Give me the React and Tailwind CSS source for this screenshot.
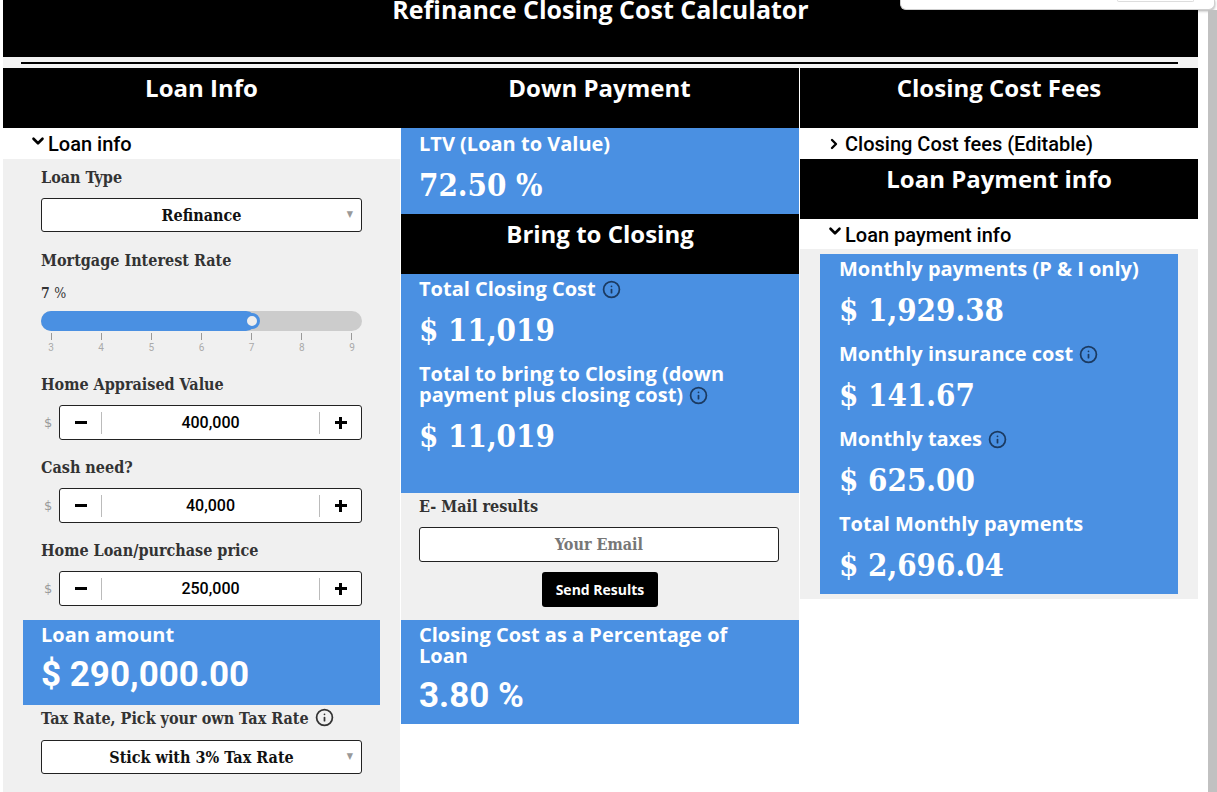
import React from "react";
import { Info, ChevronDown, ChevronRight } from "lucide-react";

function ColHead({ children, className = "" }) {
  return (
    <div
      className={
        "h-[60px] bg-black pt-[4px] text-center text-[24px] leading-[32px] font-bold text-white font-['Open_Sans',sans-serif] " +
        className
      }
    >
      {children}
    </div>
  );
}

function Label({ children, className = "" }) {
  return (
    <div
      className={
        "text-[16px] leading-[22px] font-bold text-[#333] font-['DejaVu_Serif_Condensed','DejaVu_Serif',serif] [font-stretch:condensed] " +
        className
      }
    >
      {children}
    </div>
  );
}

function Select({ children, className = "" }) {
  return (
    <div
      className={
        "relative flex h-[34px] items-center justify-center rounded-[3px] border border-[#222] bg-white pt-[2px] text-[16px] font-bold text-[#111] font-['DejaVu_Serif_Condensed','DejaVu_Serif',serif] [font-stretch:condensed] " +
        className
      }
    >
      <span>{children}</span>
      <span className="absolute right-[8px] top-[10px] text-[9px] leading-[10px] text-[#999]">▼</span>
    </div>
  );
}

function NumInput({ value, className = "" }) {
  return (
    <div className={"flex items-center " + className}>
      <span className="w-[18px] pl-[3px] text-[13px] text-[#999] font-['DejaVu_Sans',sans-serif]">$</span>
      <div className="flex h-[35px] flex-1 items-center rounded-[3px] border border-[#222] bg-white">
        <div className="flex w-[41px] items-center justify-center">
          <div className="h-[2.5px] w-[12px] bg-black" />
        </div>
        <div className="h-[22px] w-px bg-[#bbb]" />
        <div className="flex-1 pt-[1px] text-center text-[16px] font-medium text-black font-['Roboto',sans-serif]">{value}</div>
        <div className="h-[22px] w-px bg-[#bbb]" />
        <div className="relative flex h-[12px] w-[41px] items-center justify-center">
          <div className="h-[2.5px] w-[12px] bg-black" />
          <div className="absolute left-[19px] top-0 h-[12px] w-[2.5px] bg-black" />
        </div>
      </div>
    </div>
  );
}

function InfoIcon({ dark }) {
  return (
    <Info
      size={19}
      strokeWidth={2.2}
      className={"ml-[6px] inline-block align-[-3px] " + (dark ? "text-[#333]" : "text-[#1b3a61]")}
    />
  );
}

function StatLabel({ children, className = "" }) {
  return (
    <div className={"text-[20px] leading-[21px] font-bold text-white font-['Open_Sans',sans-serif] " + className}>
      {children}
    </div>
  );
}

function SlabValue({ children, className = "" }) {
  return (
    <div
      className={
        "text-[31px] leading-[44px] font-bold text-white font-['DejaVu_Serif_Condensed','DejaVu_Serif',serif] [font-stretch:condensed] " +
        className
      }
    >
      {children}
    </div>
  );
}

function SansValue({ children, className = "" }) {
  return (
    <div className={"text-[35px] leading-[44px] font-bold text-white font-['Roboto',sans-serif] " + className}>
      {children}
    </div>
  );
}

function ToggleDown({ children }) {
  return (
    <div className="flex h-[31px] items-center bg-white pl-[26px] pt-[1px] text-[20px] font-medium text-black font-['Roboto',sans-serif]">
      <ChevronDown size={18} strokeWidth={3.5} className="mb-[7px] shrink-0" />
      <span className="ml-[1px]">{children}</span>
    </div>
  );
}

function ToggleRight({ children }) {
  return (
    <div className="flex h-[31px] items-center bg-white pl-[26px] pt-[1px] text-[20px] font-medium text-black font-['Roboto',sans-serif]">
      <ChevronRight size={16} strokeWidth={3.5} className="mb-[1px] shrink-0" />
      <span className="ml-[3px]">{children}</span>
    </div>
  );
}

function Slider() {
  const ticks = [3, 4, 5, 6, 7, 8, 9];
  return (
    <div className="mt-[8px]">
      <div className="relative h-[20px] w-full rounded-full bg-[#cccccc]">
        <div className="absolute left-0 top-0 h-[20px] w-[215px] rounded-full bg-[#4a90e2]" />
        <div className="absolute left-[203px] top-[2px] h-[16px] w-[16px] rounded-full border-[3px] border-[#4a90e2] bg-[#eeeeee]" />
      </div>
      <div className="mt-[2px] flex justify-between px-[10px]">
        {ticks.map((n) => (
          <div key={n} className="flex w-0 flex-col items-center">
            <div className="h-[7px] w-px bg-[#999]" />
            <span className="mt-[2px] text-[10px] leading-[12px] text-[#aaa] font-['Roboto',sans-serif]">{n}</span>
          </div>
        ))}
      </div>
    </div>
  );
}

export default function App() {
  return (
    <div className="relative h-[792px] w-[1217px] overflow-hidden bg-white">
      {/* Title bar */}
      <div className="ml-[3px] h-[57px] w-[1195px] overflow-hidden bg-black">
        <div className="-mt-[7px] text-center text-[25px] leading-[32px] font-bold text-white font-['Open_Sans',sans-serif]">
          Refinance Closing Cost Calculator
        </div>
      </div>
      <div className="ml-[3px] flex h-[11px] w-[1195px] items-center bg-[#f3f3f3] pl-[18px] pr-[20px]">
        <div className="h-[2px] w-full bg-black" />
      </div>

      <div className="ml-[3px] grid w-[1195px] grid-cols-[397px_399px_399px]">
        {/* Left column */}
        <div className="flex flex-col">
          <ColHead>Loan Info</ColHead>
          <ToggleDown>Loan info</ToggleDown>
          <div className="h-[700px] bg-[#f0f0f0] px-[38px] pt-[8px]">
            <Label>Loan Type</Label>
            <Select className="mt-[9px]">Refinance</Select>
            <Label className="mt-[18px]">Mortgage Interest Rate</Label>
            <div className="mt-[11px] text-[14px] leading-[20px] font-bold text-[#333] font-['DejaVu_Serif_Condensed','DejaVu_Serif',serif] [font-stretch:condensed]">
              7 <span className="font-normal">%</span>
            </div>
            <Slider />
            <Label className="mt-[20px]">Home Appraised Value</Label>
            <NumInput className="mt-[9px]" value="400,000" />
            <Label className="mt-[17px]">Cash need?</Label>
            <NumInput className="mt-[9px]" value="40,000" />
            <Label className="mt-[17px]">Home Loan/purchase price</Label>
            <NumInput className="mt-[9px]" value="250,000" />
            <div className="-mx-[18px] mt-[14px] h-[85px] bg-[#4a90e2] pl-[18px] pt-[4px]">
              <StatLabel>Loan amount</StatLabel>
              <SansValue className="mt-[8px]">$ 290,000.00</SansValue>
            </div>
            <Label className="mt-[3px]">
              Tax Rate, Pick your own Tax Rate
              <InfoIcon dark />
            </Label>
            <Select className="mt-[10px]">Stick with 3% Tax Rate</Select>
          </div>
        </div>

        {/* Middle column */}
        <div className="flex flex-col">
          <ColHead>Down Payment</ColHead>
          <div className="ml-[1px] h-[86px] bg-[#4a90e2] pl-[18px] pt-[5px]">
            <StatLabel>LTV (Loan to Value)</StatLabel>
            <SlabValue className="mt-[9px]">72.50 %</SlabValue>
          </div>
          <ColHead className="h-[59px] ml-[1px] pt-[3px]">Bring to Closing</ColHead>
          <div className="ml-[1px] h-[219px] bg-[#4a90e2] pl-[18px] pt-[4px]">
            <StatLabel>
              Total Closing Cost
              <InfoIcon />
            </StatLabel>
            <SlabValue className="mt-[9px]">$ 11,019</SlabValue>
            <StatLabel className="mt-[11px]">
              Total to bring to Closing (down
              <br />
              payment plus closing cost)
              <InfoIcon />
            </StatLabel>
            <SlabValue className="mt-[9px]">$ 11,019</SlabValue>
          </div>
          <div className="ml-[1px] h-[127px] bg-[#f0f0f0] px-[18px] pt-[3px]">
            <Label>E- Mail results</Label>
            <input
              readOnly
              placeholder="Your Email"
              className="mt-[9px] block h-[35px] w-[360px] rounded-[3px] border border-[#222] bg-white text-center text-[16px] font-bold text-[#111] outline-none placeholder:text-[#777] font-['DejaVu_Serif_Condensed','DejaVu_Serif',serif] [font-stretch:condensed]"
            />
            <div className="mt-[10px] flex justify-center">
              <button className="h-[35px] w-[116px] rounded-[3px] bg-black text-[14px] font-bold text-white font-['Open_Sans',sans-serif]">
                Send Results
              </button>
            </div>
          </div>
          <div className="ml-[1px] h-[104px] bg-[#4a90e2] pl-[18px] pt-[4px]">
            <StatLabel>
              Closing Cost as a Percentage of
              <br />
              Loan
            </StatLabel>
            <SansValue className="mt-[8px]">3.80 %</SansValue>
          </div>
        </div>

        {/* Right column */}
        <div className="flex flex-col border-l border-white">
          <ColHead>Closing Cost Fees</ColHead>
          <ToggleRight>Closing Cost fees (Editable)</ToggleRight>
          <ColHead>Loan Payment info</ColHead>
          <div className="flex h-[30px] flex-col justify-center">
            <ToggleDown>Loan payment info</ToggleDown>
          </div>
          <div className="bg-[#f0f0f0] px-[20px] py-[5px]">
            <div className="h-[340px] bg-[#4a90e2] pl-[19px] pt-[4px]">
              <StatLabel>Monthly payments (P &amp; I only)</StatLabel>
              <SlabValue className="mt-[9px]">$ 1,929.38</SlabValue>
              <StatLabel className="mt-[11px]">
                Monthly insurance cost
                <InfoIcon />
              </StatLabel>
              <SlabValue className="mt-[9px]">$ 141.67</SlabValue>
              <StatLabel className="mt-[11px]">
                Monthly taxes
                <InfoIcon />
              </StatLabel>
              <SlabValue className="mt-[9px]">$ 625.00</SlabValue>
              <StatLabel className="mt-[11px]">Total Monthly payments</StatLabel>
              <SlabValue className="mt-[9px]">$ 2,696.04</SlabValue>
            </div>
          </div>
        </div>
      </div>

      {/* Top popup edge */}
      <div className="absolute left-[900px] top-0 h-[10px] w-[315px] rounded-b-[6px] border border-t-0 border-[#cfcfcf] bg-white shadow-[0_1px_3px_rgba(0,0,0,0.35)]">
        <div className="absolute right-[20px] top-0 h-[2px] w-[77px] rounded-b-[3px] border border-t-0 border-[#ddd]" />
      </div>
      {/* Scrollbar */}
      <div className="absolute bottom-0 right-0 top-[10px] w-[9px] bg-[#c1c1c1]" />
    </div>
  );
}
